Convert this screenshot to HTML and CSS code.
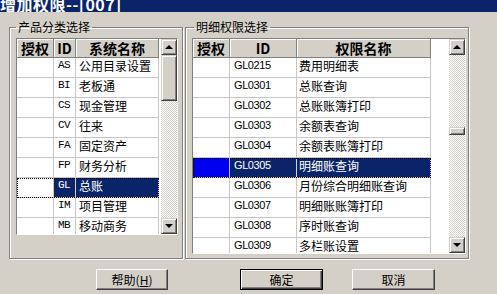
FILE: index.html
```html
<!DOCTYPE html>
<html lang="zh-CN">
<head>
    <meta charset="UTF-8">
    <meta name="viewport" content="width=device-width, initial-scale=1.0">
    <title>增加权限--[007]</title>
    <link rel="stylesheet" href="styles.css">
</head>
<body>
    <div class="titlebar"><span class="title">增加权限--[007]</span></div>

    <div class="panels">
        <fieldset class="group group-left">
            <legend>产品分类选择</legend>
            <div class="grid grid-left">
                <div class="grid-body">
                    <div class="row head">
                        <div class="cell c-auth">授权</div>
                        <div class="cell c-id">ID</div>
                        <div class="cell c-name">系统名称</div>
                    </div>
                    <div class="row"><div class="cell c-auth"></div><div class="cell c-id">AS</div><div class="cell c-name">公用目录设置</div></div>
                    <div class="row"><div class="cell c-auth"></div><div class="cell c-id">BI</div><div class="cell c-name">老板通</div></div>
                    <div class="row"><div class="cell c-auth"></div><div class="cell c-id">CS</div><div class="cell c-name">现金管理</div></div>
                    <div class="row"><div class="cell c-auth"></div><div class="cell c-id">CV</div><div class="cell c-name">往来</div></div>
                    <div class="row"><div class="cell c-auth"></div><div class="cell c-id">FA</div><div class="cell c-name">固定资产</div></div>
                    <div class="row"><div class="cell c-auth"></div><div class="cell c-id">FP</div><div class="cell c-name">财务分析</div></div>
                    <div class="row selected"><div class="cell c-auth"></div><div class="cell c-id">GL</div><div class="cell c-name">总账</div></div>
                    <div class="row"><div class="cell c-auth"></div><div class="cell c-id">IM</div><div class="cell c-name">项目管理</div></div>
                    <div class="row"><div class="cell c-auth"></div><div class="cell c-id">MB</div><div class="cell c-name">移动商务</div></div>
                </div>
                <div class="scrollbar">
                    <div class="sb-btn"><span class="arrow-up"></span></div>
                    <div class="sb-track"><div class="sb-thumb thumb-left"></div></div>
                    <div class="sb-btn"><span class="arrow-down"></span></div>
                </div>
            </div>
        </fieldset>

        <fieldset class="group group-right">
            <legend>明细权限选择</legend>
            <div class="grid grid-right">
                <div class="grid-body">
                    <div class="row head">
                        <div class="cell c-auth">授权</div>
                        <div class="cell c-id">ID</div>
                        <div class="cell c-name">权限名称</div>
                    </div>
                    <div class="row"><div class="cell c-auth"></div><div class="cell c-id">GL0215</div><div class="cell c-name">费用明细表</div></div>
                    <div class="row"><div class="cell c-auth"></div><div class="cell c-id">GL0301</div><div class="cell c-name">总账查询</div></div>
                    <div class="row"><div class="cell c-auth"></div><div class="cell c-id">GL0302</div><div class="cell c-name">总账账簿打印</div></div>
                    <div class="row"><div class="cell c-auth"></div><div class="cell c-id">GL0303</div><div class="cell c-name">余额表查询</div></div>
                    <div class="row"><div class="cell c-auth"></div><div class="cell c-id">GL0304</div><div class="cell c-name">余额表账簿打印</div></div>
                    <div class="row selected"><div class="cell c-auth marked"></div><div class="cell c-id">GL0305</div><div class="cell c-name">明细账查询</div></div>
                    <div class="row"><div class="cell c-auth"></div><div class="cell c-id">GL0306</div><div class="cell c-name">月份综合明细账查询</div></div>
                    <div class="row"><div class="cell c-auth"></div><div class="cell c-id">GL0307</div><div class="cell c-name">明细账账簿打印</div></div>
                    <div class="row"><div class="cell c-auth"></div><div class="cell c-id">GL0308</div><div class="cell c-name">序时账查询</div></div>
                    <div class="row"><div class="cell c-auth"></div><div class="cell c-id">GL0309</div><div class="cell c-name">多栏账设置</div></div>
                </div>
                <div class="scrollbar">
                    <div class="sb-btn"><span class="arrow-up"></span></div>
                    <div class="sb-track"><div class="sb-thumb thumb-right"></div></div>
                    <div class="sb-btn"><span class="arrow-down"></span></div>
                </div>
            </div>
        </fieldset>
    </div>

    <div class="buttons">
        <button class="btn btn-help">帮助(<u>H</u>)</button>
        <button class="btn btn-ok">确定</button>
        <button class="btn btn-cancel">取消</button>
    </div>
</body>
</html>
```

FILE: styles.css
```css
body {
    margin: 0;
    background-color: #d4d0c8;
    font-family: "Noto Sans CJK SC", "Liberation Sans", sans-serif;
    font-size: 12px;
    color: #000;
    overflow: hidden;
}
.titlebar {
    height: 12px;
    background-color: #0a246a;
    overflow: hidden;
}
.title {
    display: block;
    margin-top: -4px;
    color: #fff;
    font-size: 16px;
    font-weight: bold;
    line-height: 16px;
    letter-spacing: 0.5px;
    white-space: nowrap;
}
.panels {
    display: flex;
    gap: 2px;
    margin-top: 8px;
    padding-left: 9px;
}
.group {
    box-sizing: border-box;
    height: 239px;
    margin: 0;
    min-width: 0;
    padding: 4px 0 0 6px;
    border: 1px solid #808080;
    box-shadow: inset 1px 1px 0 #fff, 1px 1px 0 #fff;
}
.group-left {
    width: 174px;
}
.group-right {
    width: 284px;
}
.group legend {
    padding: 0 2px;
    font-size: 12px;
    line-height: 14px;
}
.group-right legend {
    margin-left: 2px;
}
.grid {
    display: flex;
    box-sizing: border-box;
    background-color: #fff;
    border: 1px solid;
    border-color: #808080 #fff #fff #808080;
}
.grid-left {
    width: 162px;
    height: 197px;
}
.grid-right {
    width: 274px;
    height: 216px;
}
.grid-body {
    flex: 1;
    overflow: hidden;
}
.row {
    display: flex;
    width: max-content;
    height: 20px;
}
.cell {
    box-sizing: border-box;
    padding: 1px 0 0 4px;
    border-right: 1px solid #c8c8c8;
    border-bottom: 1px solid #c8c8c8;
    line-height: 13px;
    white-space: nowrap;
    overflow: hidden;
}
.c-auth {
    width: 37px;
}
.c-id {
    width: 22px;
    font-family: "Liberation Mono", monospace;
    font-size: 11px;
    letter-spacing: -0.6px;
}
.c-name {
    width: 83px;
    padding-left: 3px;
}
.grid-right .c-id {
    width: 67px;
    font-family: "Liberation Sans", sans-serif;
    letter-spacing: -0.4px;
}
.grid-right .c-name {
    width: 134px;
    padding-left: 2px;
}
.row.head {
    height: 19px;
}
.head .cell {
    padding: 0;
    background-color: #d4d0c8;
    border-color: #808080;
    box-shadow: inset 1px 1px 0 #fff;
    font-family: "Noto Sans CJK SC", sans-serif;
    font-size: 14px;
    font-weight: bold;
    letter-spacing: 0;
    line-height: 18px;
    text-align: center;
}
.row.selected {
    outline: 1px dotted #000;
    outline-offset: -1px;
}
.selected .c-id,
.selected .c-name {
    background-color: #0a246a;
    color: #fff;
    border-right-color: #d4d0c8;
}
.selected .marked {
    background-color: #0000f0;
}
.scrollbar {
    display: flex;
    flex-direction: column;
    width: 16px;
}
.sb-btn {
    display: flex;
    justify-content: center;
    align-items: center;
    box-sizing: border-box;
    height: 16px;
    background-color: #d4d0c8;
    border: 1px solid;
    border-color: #d4d0c8 #404040 #404040 #d4d0c8;
    box-shadow: inset 1px 1px 0 #fff, inset -1px -1px 0 #808080;
}
.arrow-up {
    border-left: 4px solid transparent;
    border-right: 4px solid transparent;
    border-bottom: 4px solid #000;
}
.arrow-down {
    border-left: 4px solid transparent;
    border-right: 4px solid transparent;
    border-top: 4px solid #000;
}
.sb-track {
    flex: 1;
    background: repeating-conic-gradient(#fff 0 25%, #d4d0c8 0 50%) 0 0 / 2px 2px;
}
.sb-thumb {
    box-sizing: border-box;
    background-color: #d4d0c8;
    border: 1px solid;
    border-color: #d4d0c8 #404040 #404040 #d4d0c8;
    box-shadow: inset 1px 1px 0 #fff, inset -1px -1px 0 #808080;
}
.thumb-left {
    height: 46px;
}
.thumb-right {
    height: 8px;
    margin-top: 72px;
}
.buttons {
    display: flex;
    margin-top: 10px;
    padding-left: 96px;
}
.btn {
    box-sizing: border-box;
    height: 21px;
    padding: 0;
    background-color: #d4d0c8;
    font-family: "Noto Sans CJK SC", sans-serif;
    font-size: 12px;
    color: #000;
    border: 1px solid;
    border-color: #fff #404040 #404040 #fff;
    box-shadow: inset -1px -1px 0 #808080;
}
.btn-help {
    width: 72px;
}
.btn-ok {
    width: 83px;
    margin-left: 72px;
    border-color: #000;
    box-shadow: inset 1px 1px 0 #fff, inset -1px -1px 0 #404040, inset -2px -2px 0 #808080;
}
.btn-cancel {
    width: 83px;
    margin-left: 29px;
}
```
